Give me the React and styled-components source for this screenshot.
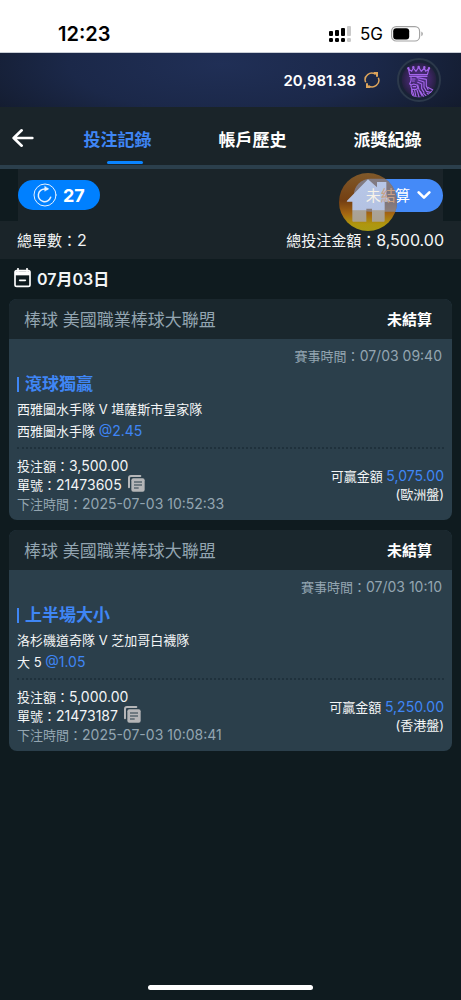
import React, { useState } from "react";
import styled, { createGlobalStyle } from "styled-components";

const c = {
  page: "#0f1b1f",
  bar: "#1a2429",
  head: "#1a272d",
  panel: "#2b3f4b",
  muted: "#93a5b1",
  blue: "#3f86f5",
  text: "#f3f5f6",
};

const Global = createGlobalStyle`
  * { box-sizing: border-box; }
  body {
    margin: 0;
    background: ${c.page};
    color: ${c.text};
    font-family: Inter, "Noto Sans CJK TC", sans-serif;
    font-size: 13px;
  }
  button, select { font-family: inherit; border: 0; background: none; padding: 0; margin: 0; cursor: pointer; }
  svg { display: block; }
  h2, h3, p { margin: 0; }
`;

const Page = styled.div`
  display: flex;
  flex-direction: column;
  min-height: 100vh;
`;

const StatusBar = styled.div`
  display: flex;
  align-items: center;
  justify-content: space-between;
  height: 53px;
  padding: 16px 38px 0 58px;
  background: #fff;
  border-bottom: 1px solid #c9ced6;
  color: #000;
`;

const Clock = styled.span`
  font-size: 20px;
  font-weight: 600;
`;

const StatusIcons = styled.div`
  display: flex;
  align-items: center;
  gap: 8px;
  font-size: 17px;
  font-weight: 400;
`;

const Header = styled.header`
  display: flex;
  align-items: center;
  justify-content: flex-end;
  height: 54px;
  padding-right: 20px;
  background: radial-gradient(ellipse 60% 160% at 48% 20%, #202f56 0%, #1b2849 55%, #131b2d 100%);
`;

const Balance = styled.span`
  font-size: 15px;
  font-weight: 600;
  color: #fff;
`;

const RefreshButton = styled.button`
  margin: 0 17px 0 8px;
`;

const TabBar = styled.nav`
  display: flex;
  height: 62px;
  padding-right: 6px;
  background: ${c.bar};
  border-bottom: 4px solid #2b3f4c;
`;

const BackButton = styled.button`
  width: 50px;
  padding: 3px 0 0 12px;
`;

const Tab = styled.button`
  flex: 1;
  display: flex;
  flex-direction: column;
  align-items: center;
  justify-content: flex-end;
  gap: 9px;
  font-size: 17px;
  line-height: 24px;
  font-weight: 600;
  color: ${(p) => (p.$active ? c.blue : "#fff")};
  padding-bottom: 1px;
  &::after {
    content: "";
    width: 36px;
    height: 3px;
    margin-left: 14px;
    border-radius: 2px;
    background: ${(p) => (p.$active ? "#0a84ff" : "transparent")};
  }
`;

const FilterWrap = styled.div`
  padding: 0 18px;
`;

const FilterRow = styled.div`
  position: relative;
  display: flex;
  align-items: center;
  justify-content: space-between;
  height: 52px;
  background: ${c.bar};
`;

const CountdownButton = styled.button`
  display: flex;
  align-items: center;
  gap: 6px;
  height: 30px;
  padding: 0 15px;
  border-radius: 15px;
  background: #0080ff;
  color: #fff;
  font-size: 18px;
  font-weight: 700;
`;

const SelectWrap = styled.label`
  display: flex;
  align-items: center;
  position: relative;
  svg { position: absolute; right: 12px; pointer-events: none; }
`;

const StatusSelect = styled.select`
  appearance: none;
  width: 90px;
  height: 33px;
  padding: 0 0 0 12px;
  border-radius: 17px;
  background: #448af8;
  color: #fff;
  font-size: 15px;
`;

const HomeButton = styled.button`
  position: absolute;
  right: 46px;
  top: 4px;
  width: 58px;
  height: 58px;
  z-index: 1;
`;

const Summary = styled.div`
  display: flex;
  align-items: center;
  justify-content: space-between;
  height: 38px;
  padding: 0 17px 2px;
  background: ${c.bar};
  font-size: 15px;
`;

const SummaryNumber = styled.span`
  font-size: 16px;
`;

const DateRow = styled.h2`
  display: flex;
  align-items: center;
  gap: 6px;
  height: 40px;
  padding: 0 14px 2px;
  font-size: 16px;
  font-weight: 600;
`;

const List = styled.main`
  display: flex;
  flex-direction: column;
  gap: 10px;
  padding: 0 9px;
`;

const Card = styled.article`
  border-radius: 8px;
  overflow: hidden;
  background: ${c.panel};
`;

const CardHead = styled.div`
  display: flex;
  align-items: center;
  justify-content: space-between;
  height: 40px;
  padding: 0 20px 2px 15px;
  background: ${c.head};
`;

const League = styled.span`
  font-size: 17px;
  color: ${c.muted};
`;

const State = styled.span`
  font-size: 15px;
  font-weight: 600;
  color: #fff;
`;

const CardBody = styled.div`
  padding: 7px 8px;
`;

const Num = styled.span`
  font-size: 14px;
  color: ${(p) => (p.$blue ? c.blue : "inherit")};
`;

const MatchTime = styled.p`
  line-height: 20px;
  padding-right: 2px;
  text-align: right;
  color: ${c.muted};
`;

const BetType = styled.h3`
  display: flex;
  align-items: center;
  gap: 6px;
  margin: 6px 0 2px;
  font-size: 17px;
  line-height: 24px;
  font-weight: 600;
  color: ${c.blue};
  &::before {
    content: "";
    width: 2px;
    height: 15px;
    background: ${c.blue};
  }
`;

const Line = styled.p`
  height: 22px;
  line-height: 22px;
`;

const Details = styled.div`
  display: flex;
  align-items: center;
  justify-content: space-between;
  margin-top: 5px;
  padding-top: 7px;
  border-top: 2px dotted #1f313c;
`;

const Detail = styled.div`
  display: flex;
  align-items: flex-start;
  gap: 6px;
  height: 19px;
  line-height: 19px;
  color: ${(p) => (p.$muted ? c.muted : c.text)};
`;

const Payout = styled.div`
  line-height: 18px;
  text-align: right;
`;

const HomeIndicator = styled.div`
  width: 36%;
  height: 5px;
  margin: auto auto 10px;
  border-radius: 3px;
  background: #fff;
`;

const SignalIcon = () => (
  <svg width="23" height="17" viewBox="0 0 23 17">
    <g fill="#000">
      <rect x="0" y="5" width="4" height="5" rx="1" />
      <rect x="6" y="4" width="4" height="6" rx="1" />
      <rect x="12" y="2" width="4" height="8" rx="1" />
      <rect x="0" y="12" width="4" height="4" rx="1.3" />
      <rect x="6" y="12" width="4" height="4" rx="1.3" />
      <rect x="12" y="12" width="4" height="4" rx="1.3" />
    </g>
    <g fill="#c9c9c9">
      <rect x="18" y="0" width="4" height="10" rx="1" />
      <rect x="18" y="12" width="4" height="4" rx="1.3" />
    </g>
  </svg>
);

const BatteryIcon = () => (
  <svg width="32" height="16" viewBox="0 0 32 16">
    <rect x="0.6" y="0.6" width="28" height="14.4" rx="4.6" fill="none" stroke="#a3a3a3" strokeWidth="1.2" />
    <rect x="2.2" y="2.2" width="16" height="11.2" rx="3" fill="#000" />
    <path d="M30.3 5.4a2.6 2.6 0 0 1 0 4.8z" fill="#a3a3a3" />
  </svg>
);

const RefreshIcon = () => (
  <svg width="16" height="16" viewBox="0 0 48 48" fill="none" stroke="#dca45b" strokeWidth="4.5">
    <path d="M5 31A20 20 0 0 1 35 7" />
    <path d="M43 17A20 20 0 0 1 13 41" />
    <path d="M29 3h10v11" strokeWidth="6" />
    <path d="M19 45H9V34" strokeWidth="6" />
  </svg>
);

const Avatar = () => (
  <svg width="44" height="44" viewBox="0 0 132 132" role="img" aria-label="avatar">
    <defs>
      <radialGradient id="glow" cx="50%" cy="48%" r="52%">
        <stop offset="0" stopColor="#55308a" />
        <stop offset="0.65" stopColor="#3b2560" />
        <stop offset="1" stopColor="#22203c" />
      </radialGradient>
      <clipPath id="disc"><circle cx="66" cy="66" r="52" /></clipPath>
    </defs>
    <circle cx="66" cy="66" r="63" fill="#182236" stroke="#2c394b" strokeWidth="6" />
    <circle cx="66" cy="66" r="52" fill="url(#glow)" />
    <g clipPath="url(#disc)" fill="none" stroke="#a365ea" strokeWidth="3.4" strokeLinejoin="round" strokeLinecap="round">
      <path d="M38 50 34 32l10 8 5-10 8 10 8-12 8 12 9-10 4 10 10-8-5 18z" />
      <path d="M38 55h52" />
      <circle cx="34" cy="31" r="2" />
      <circle cx="49" cy="28" r="2" />
      <circle cx="65" cy="27" r="2" />
      <circle cx="82" cy="28" r="2" />
      <circle cx="96" cy="31" r="2" />
      <path d="M42 57v11l-4 10 4 2v6l2 6v14l6 12h36l22-22-16-8" />
      <path d="M44 63h10M46 69h6M42 81l8-3 10 3 3 8-5 5H46M48 86h8" />
      <path d="M60 59l28 5v20l5 10M64 66l17 6v16l7 12 16 4M62 73l12 5v14l7 11" />
      <path d="M62 81l4 14 8 17M46 98l6 18M53 97l4 20M60 96l6 21M70 100l10 16M80 106l8 8M90 105l6 5" />
    </g>
  </svg>
);

const BackIcon = () => (
  <svg width="22" height="20" viewBox="0 0 66 60" fill="none" stroke="#fff" strokeWidth="8" strokeLinecap="round" strokeLinejoin="round">
    <path d="M29 7 5 30l24 23M6 30h55" />
  </svg>
);

const CountdownIcon = () => (
  <svg width="24" height="24" viewBox="0 0 72 72" fill="none" stroke="#e8f2ff" strokeLinecap="round">
    <circle cx="36" cy="36" r="33" strokeWidth="3" />
    <path d="M53 43A19 19 0 1 1 36 18h7" strokeWidth="4.5" />
    <path d="M35 10v15l12-7z" fill="#e8f2ff" strokeWidth="1" />
  </svg>
);

const HomeIcon = () => (
  <svg width="58" height="58" viewBox="0 0 174 174">
    <defs>
      <linearGradient id="gold" x1="0" y1="0" x2="0" y2="1">
        <stop offset="0" stopColor="#80592a" />
        <stop offset="0.48" stopColor="#743f12" />
        <stop offset="0.7" stopColor="#a46512" />
        <stop offset="0.88" stopColor="#af960e" />
        <stop offset="1" stopColor="#a89b13" />
      </linearGradient>
      <linearGradient id="house" x1="0" y1="0" x2="0" y2="1">
        <stop offset="0" stopColor="#b7c7e8" />
        <stop offset="0.72" stopColor="#b4c2e2" />
        <stop offset="0.74" stopColor="#aaa397" />
        <stop offset="1" stopColor="#aaa08f" />
      </linearGradient>
      <clipPath id="round"><circle cx="87" cy="87" r="87" /></clipPath>
    </defs>
    <circle cx="87" cy="87" r="87" fill="url(#gold)" />
    <g clipPath="url(#round)">
      <path d="M94 17h90v99H94a49 49 0 0 1 0-99z" fill="#8494bd" fillOpacity="0.62" />
    </g>
    <path d="M87 19 114 43V27h28v43l12 13q1 3-2 3h-15v57q0 3-3 3H99v-39H82v39H43q-3 0-3-3V86H25q-3 0-1-3z" fill="url(#house)" />
    <text x="80" y="84" fill="#f8f2e8" fontSize="45">未</text>
    <text x="125" y="84" fill="#c9a184" fontSize="45">結</text>
  </svg>
);

const ChevronIcon = () => (
  <svg width="14" height="10" viewBox="0 0 42 30" fill="none" stroke="#fff" strokeWidth="8" strokeLinecap="round" strokeLinejoin="round">
    <path d="m5 7 16 16L37 7" />
  </svg>
);

const CalendarIcon = () => (
  <svg width="17" height="20" viewBox="0 0 51 60">
    <path d="M12 2v8M39 2v8" stroke="#fff" strokeWidth="5" strokeLinecap="round" />
    <rect x="3" y="8" width="45" height="47" rx="5" fill="none" stroke="#fff" strokeWidth="5" />
    <path d="M3 10h45v12H3z" fill="#fff" />
    <path d="M17 37h17" stroke="#fff" strokeWidth="5" strokeLinecap="round" />
  </svg>
);

const CopyIcon = () => (
  <svg width="17" height="17" viewBox="0 0 51 51">
    <path d="M3 37V9q0-6 6-6h28" fill="none" stroke="#b5b6b8" strokeWidth="6" strokeLinecap="round" />
    <rect x="10" y="10" width="40" height="40" rx="6" fill="#b5b6b8" />
    <path d="M18 21h24M18 30h24M18 39h14" stroke="#2a3e4a" strokeWidth="3.6" />
  </svg>
);

const bets = [
  {
    id: "21473605", time: "07/03 09:40", type: "滾球獨贏", teams: "西雅圖水手隊 V 堪薩斯市皇家隊",
    pick: "西雅圖水手隊", odds: "@2.45", stake: "3,500.00", placed: "2025-07-03 10:52:33",
    win: "5,075.00", market: "(歐洲盤)",
  },
  {
    id: "21473187", time: "07/03 10:10", type: "上半場大小", teams: "洛杉磯道奇隊 V 芝加哥白襪隊",
    pick: "大 5", odds: "@1.05", stake: "5,000.00", placed: "2025-07-03 10:08:41",
    win: "5,250.00", market: "(香港盤)",
  },
];

const BetCard = ({ bet }) => (
  <Card>
    <CardHead>
      <League>棒球 美國職業棒球大聯盟</League>
      <State>未結算</State>
    </CardHead>
    <CardBody>
      <MatchTime>賽事時間：<Num>{bet.time}</Num></MatchTime>
      <BetType>{bet.type}</BetType>
      <Line>{bet.teams}</Line>
      <Line>{bet.pick} <Num $blue>{bet.odds}</Num></Line>
      <Details>
        <div>
          <Detail><span>投注額：<Num>{bet.stake}</Num></span></Detail>
          <Detail>
            <span>單號：<Num>{bet.id}</Num></span>
            <button type="button" aria-label="複製單號"><CopyIcon /></button>
          </Detail>
          <Detail $muted><span>下注時間：<Num>{bet.placed}</Num></span></Detail>
        </div>
        <Payout>
          <div>可贏金額 <Num $blue>{bet.win}</Num></div>
          <div>{bet.market}</div>
        </Payout>
      </Details>
    </CardBody>
  </Card>
);

const tabs = ["投注記錄", "帳戶歷史", "派獎紀錄"];

export default function App() {
  const [active, setActive] = useState(0);
  return (
    <Page>
      <Global />
      <StatusBar>
        <Clock>12:23</Clock>
        <StatusIcons><SignalIcon />5G<BatteryIcon /></StatusIcons>
      </StatusBar>
      <Header>
        <Balance>20,981.38</Balance>
        <RefreshButton type="button" aria-label="刷新餘額"><RefreshIcon /></RefreshButton>
        <Avatar />
      </Header>
      <TabBar>
        <BackButton type="button" aria-label="返回"><BackIcon /></BackButton>
        {tabs.map((t, i) => (
          <Tab key={t} type="button" $active={i === active} onClick={() => setActive(i)}>{t}</Tab>
        ))}
      </TabBar>
      <FilterWrap>
        <FilterRow>
          <CountdownButton type="button"><CountdownIcon />27</CountdownButton>
          <SelectWrap>
            <StatusSelect aria-label="注單狀態" defaultValue="open">
              <option value="open">未結算</option>
            </StatusSelect>
            <ChevronIcon />
          </SelectWrap>
          <HomeButton type="button" aria-label="首頁"><HomeIcon /></HomeButton>
        </FilterRow>
      </FilterWrap>
      <Summary>
        <span>總單數：<SummaryNumber>2</SummaryNumber></span>
        <span>總投注金額：<SummaryNumber>8,500.00</SummaryNumber></span>
      </Summary>
      <DateRow><CalendarIcon />07月03日</DateRow>
      <List>
        {bets.map((b) => <BetCard key={b.id} bet={b} />)}
      </List>
      <HomeIndicator />
    </Page>
  );
}
